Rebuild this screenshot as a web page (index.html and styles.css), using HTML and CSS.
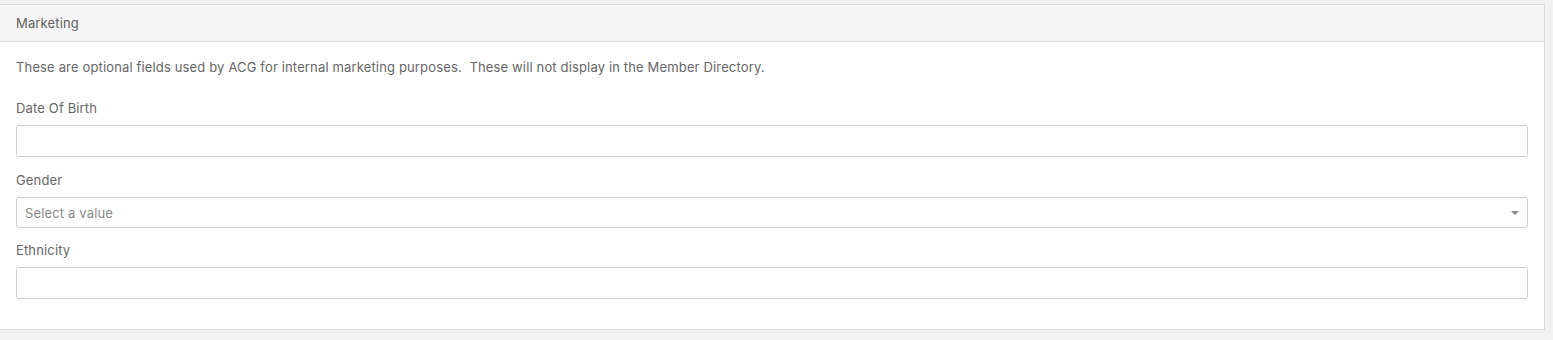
FILE: index.html
```html
<!DOCTYPE html>
<html lang="en">
<head>
    <meta charset="UTF-8">
    <title>Marketing</title>
    <link rel="stylesheet" href="styles.css">
</head>
<body>
<!-- marketing panel -->
<div class="panel">
    <div class="panel-heading">Marketing</div>
    <div class="panel-body">
        <p class="help">These are optional fields used by ACG for internal marketing purposes.&nbsp; These will not display in the Member Directory.</p>

        <div class="form-group">
            <label for="dob">Date Of Birth</label>
            <input type="text" id="dob" class="form-control">
        </div>

        <div class="form-group">
            <label>Gender</label>
            <div class="select-box">
                <span class="placeholder">Select a value</span>
                <span class="caret"></span>
            </div>
        </div>

        <div class="form-group">
            <label for="ethnicity">Ethnicity</label>
            <input type="text" id="ethnicity" class="form-control">
        </div>
    </div>
</div>
</body>
</html>
```

FILE: styles.css
```css
/* page */
html, body {
    margin: 0;
    padding: 0;
    background: #f1f1f1;
    font-family: Inter, "Open Sans", sans-serif;
    font-size: 13px;
    letter-spacing: 0.15px;
    color: #666;
}

body {
    padding: 4px 8px 10px 0;
}

/* panel */
.panel {
    margin-left: -1px;
    background: #fff;
    border: 1px solid #dcdcdc;
}

.panel-heading {
    height: 36px;
    line-height: 36px;
    padding: 0 16px;
    background: #f5f5f5;
    border-bottom: 1px solid #d6d6d6;
    color: #606060;
}

.panel-body {
    padding: 15px 16px;
}

.help {
    margin: 0 0 21px;
    line-height: 20px;
}

/* fields */
.form-group {
    margin-bottom: 12px;
}

.form-group:first-of-type {
    margin-bottom: 13px;
}

.form-group:last-child {
    margin-bottom: 15px;
}

.form-group label {
    display: block;
    line-height: 20px;
    margin-bottom: 7px;
}

.form-control {
    display: block;
    box-sizing: border-box;
    width: 100%;
    height: 32px;
    margin: 0;
    padding: 0 8px;
    border: 1px solid #cfcfcf;
    border-radius: 3px;
    font: inherit;
    background: #fff;
}

.select-box {
    display: flex;
    align-items: center;
    justify-content: space-between;
    box-sizing: border-box;
    height: 31px;
    padding: 0 8px;
    border: 1px solid #cfcfcf;
    border-radius: 3px;
}

.placeholder {
    color: #8a8a8a;
}

.caret {
    width: 0;
    height: 0;
    border-left: 4px solid transparent;
    border-right: 4px solid transparent;
    border-top: 4px solid #888;
}
```
